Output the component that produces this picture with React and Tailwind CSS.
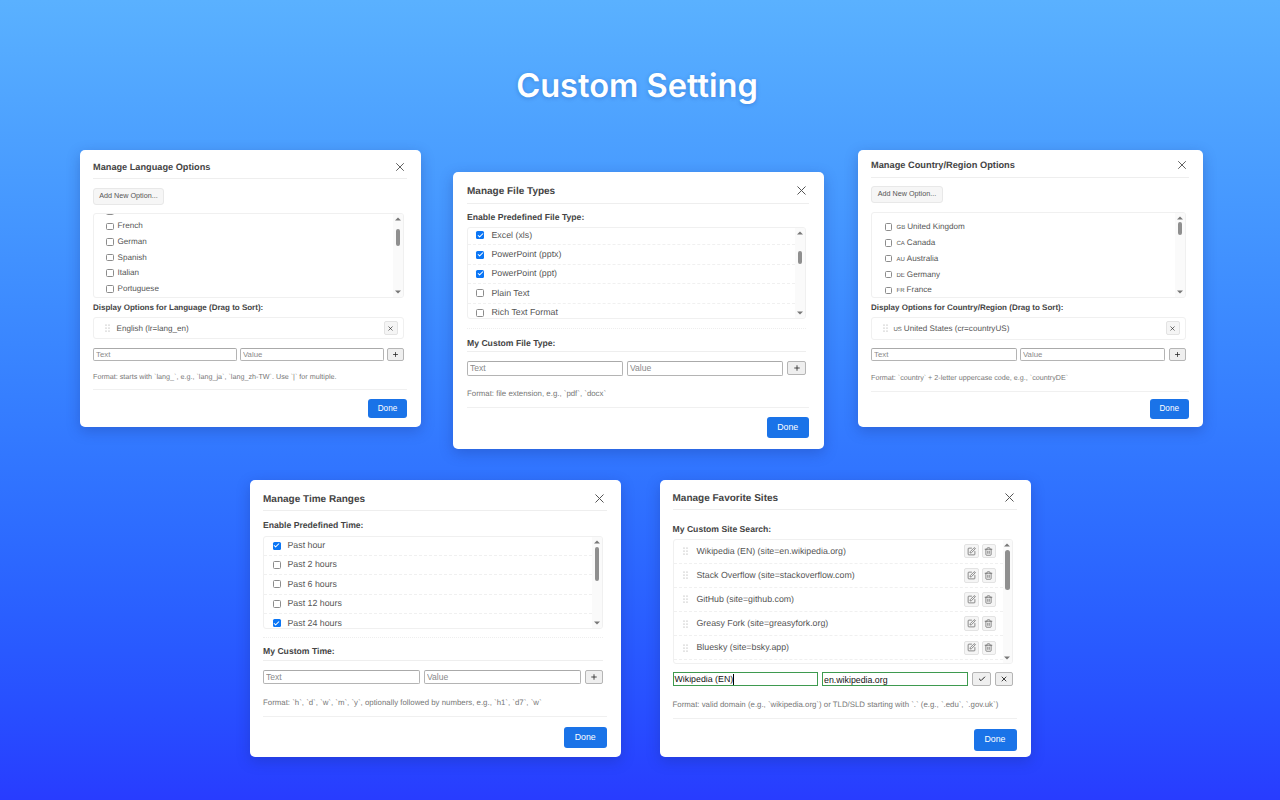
import React from "react";
import { X, Plus, Check, SquarePen, Trash2 } from "lucide-react";

const LANGS = ["", "French", "German", "Spanish", "Italian", "Portuguese"];
const COUNTRIES = [
  ["GB", "United Kingdom"],
  ["CA", "Canada"],
  ["AU", "Australia"],
  ["DE", "Germany"],
  ["FR", "France"],
];
const FILE_TYPES = [
  ["Excel (xls)", true],
  ["PowerPoint (pptx)", true],
  ["PowerPoint (ppt)", true],
  ["Plain Text", false],
  ["Rich Text Format", false],
];
const TIMES = [
  ["Past hour", true],
  ["Past 2 hours", false],
  ["Past 6 hours", false],
  ["Past 12 hours", false],
  ["Past 24 hours", true],
];
const SITES = [
  "Wikipedia (EN) (site=en.wikipedia.org)",
  "Stack Overflow (site=stackoverflow.com)",
  "GitHub (site=github.com)",
  "Greasy Fork (site=greasyfork.org)",
  "Bluesky (site=bsky.app)",
];

function Grip({ className = "" }) {
  return (
    <svg viewBox="0 0 5 8" className={`shrink-0 w-[5px] h-[8px] ${className}`} fill="#999">
      <circle cx="1" cy="1" r="0.6" />
      <circle cx="4" cy="1" r="0.6" />
      <circle cx="1" cy="4" r="0.6" />
      <circle cx="4" cy="4" r="0.6" />
      <circle cx="1" cy="7" r="0.6" />
      <circle cx="4" cy="7" r="0.6" />
    </svg>
  );
}

function Arrow({ up }) {
  return (
    <svg viewBox="0 0 6 4" className="w-[6px] h-[4px] shrink-0">
      <polygon points={up ? "3,0.5 6,3.5 0,3.5" : "0,0.5 6,0.5 3,3.5"} fill="#777" />
    </svg>
  );
}

// fake native scrollbar, thumbClass gives its offset and height
function Scrollbar({ thumbClass, className = "" }) {
  return (
    <div className={`shrink-0 h-full bg-[#fafafa] flex flex-col items-center justify-between py-[3px] ${className}`}>
      <Arrow up />
      <div className="flex-1 w-full flex flex-col items-center">
        <div className={`w-[4.5px] rounded-full bg-[#8f8f8f] ${thumbClass}`} />
      </div>
      <Arrow />
    </div>
  );
}

function Box({ checked, className }) {
  return (
    <span
      className={`shrink-0 flex items-center justify-center rounded-[1.5px] ${
        checked ? "bg-[#0b76f5]" : "bg-white border border-[#8c8c8c]"
      } ${className}`}
    >
      {checked && <Check className="w-[7px] h-[7px] text-white" strokeWidth={3.5} />}
    </span>
  );
}

function Card({ title, className, titleClass, headerClass, iconClass, children }) {
  return (
    <div className={`shrink-0 bg-white rounded-[5px] shadow-[0_4px_14px_rgba(20,40,120,0.28)] flex flex-col ${className}`}>
      <div className={`flex items-center justify-between border-b border-[#eeeeee] ${headerClass}`}>
        <h2 className={`font-bold text-[#444444] ${titleClass}`}>{title}</h2>
        <X className={`text-[#555555] ${iconClass}`} strokeWidth={1.6} />
      </div>
      {children}
    </div>
  );
}

function Field({ placeholder, className }) {
  return (
    <input
      readOnly
      placeholder={placeholder}
      className={`min-w-0 border border-[#b4b4b4] border-t-[#aaaaaa] rounded-[2px] bg-white px-[2px] placeholder:text-[#8a8a8a] ${className}`}
    />
  );
}

function SmallButton({ className, children }) {
  return (
    <button className={`shrink-0 flex items-center justify-center bg-[#efefef] border border-[#b5b5b5] rounded-[2px] text-[#222222] ${className}`}>
      {children}
    </button>
  );
}

function Done({ className }) {
  return (
    <div className="flex justify-end">
      <button className={`bg-[#1a73e8] text-white rounded-[3px] pt-[1px] ${className}`}>Done</button>
    </div>
  );
}

function CheckRow({ label, checked, className, boxClass }) {
  return (
    <div className={`flex items-center border-b border-dashed border-[#f0f0f0] text-[#555555] ${className}`}>
      <Box checked={checked} className={boxClass} />
      <span>{label}</span>
    </div>
  );
}

function IconBtn({ children }) {
  return (
    <button className="w-[14.5px] h-[14.5px] flex items-center justify-center bg-[#f5f5f5] border border-[#e3e3e3] rounded-[2px] text-[#666666]">
      {children}
    </button>
  );
}

function LanguageCard() {
  return (
    <Card
      title="Manage Language Options"
      className="w-[341px] h-[277px] pl-[13px] pr-[14px]"
      headerClass="h-[28.5px] pt-[7px]"
      titleClass="text-[9.2px] pt-[2px]"
      iconClass="w-[14px] h-[14px]"
    >
      <button className="mt-[9px] w-[71px] h-[17px] bg-[#f6f6f6] border border-[#e8e8e8] rounded-[3px] text-[7.2px] text-[#555555]">
        Add New Option...
      </button>
      <div className="mt-[8.5px] w-[311px] h-[85px] flex border border-[#f0f0f0] rounded-[3px] overflow-hidden">
        <div className="flex-1 -mt-[11px]">
          {LANGS.map((name) => (
            <div key={name} className="flex items-center h-[15.6px] pl-[12px] text-[8.1px] text-[#555555]">
              <Box className="mr-[4px] w-[7.5px] h-[7.5px]" />
              <span>{name}</span>
            </div>
          ))}
        </div>
        <Scrollbar className="w-[10px]" thumbClass="mt-[8px] h-[17px]" />
      </div>
      <div className="mt-[4px] h-[12px] flex items-center font-bold text-[8px] text-[#444444]">
        Display Options for Language (Drag to Sort):
      </div>
      <div className="mt-[3px] w-[311px] h-[22px] flex items-center justify-between pl-[10.5px] pr-[5.5px] border border-[#f0f0f0] rounded-[3px] text-[8.1px] text-[#555555]">
        <div className="flex items-center gap-[7px]">
          <Grip />
          <span className="pt-[2px]">English (lr=lang_en)</span>
        </div>
        <SmallButton className="w-[14px] h-[14px] !bg-[#f5f5f5] !border-[#e3e3e3]">
          <X className="w-[7px] h-[7px]" strokeWidth={2.2} />
        </SmallButton>
      </div>
      <div className="mt-[8.5px] w-[311px] flex gap-[3px] h-[13px]">
        <Field placeholder="Text" className="w-[144px] h-[13px] text-[7.8px]" />
        <Field placeholder="Value" className="w-[144px] h-[13px] text-[7.8px]" />
        <SmallButton className="w-[17px] h-[13px]">
          <Plus className="w-[7px] h-[7px]" strokeWidth={2.6} />
        </SmallButton>
      </div>
      <p className="mt-[12px] h-[10px] flex items-center text-[7.2px] text-[#777777]">
        Format: starts with `lang_`, e.g., `lang_ja`, `lang_zh-TW`. Use `|` for multiple.
      </p>
      <div className="mt-[6.5px] pt-[8.5px] border-t border-[#f0f0f0]">
        <Done className="w-[39px] h-[19.5px] text-[8.2px]" />
      </div>
    </Card>
  );
}

function FileTypesCard() {
  return (
    <Card
      title="Manage File Types"
      className="w-[371px] h-[277px] mt-[22px] ml-[32px] pl-[14px] pr-[15px]"
      headerClass="h-[32px] pt-[6px]"
      titleClass="text-[10px] pt-[1px]"
      iconClass="w-[15px] h-[15px]"
    >
      <div className="mt-[7px] h-[12px] flex items-center font-bold text-[8.65px] text-[#444444]">
        Enable Predefined File Type:
      </div>
      <div className="mt-[3.5px] w-[339px] h-[92.5px] flex border border-[#f0f0f0] rounded-[3px] overflow-hidden">
        <div className="flex-1 -mt-[1.5px]">
          {FILE_TYPES.map(([label, on]) => (
            <CheckRow
              key={label}
              label={label}
              checked={on}
              className="h-[19.4px] pl-[8px] text-[8.8px]"
              boxClass="mr-[7.5px] w-[8px] h-[8px]"
            />
          ))}
        </div>
        <Scrollbar className="w-[10px]" thumbClass="mt-[16px] h-[13.5px]" />
      </div>
      <div className="mt-[8.5px] w-[339px] border-t border-dotted border-[#eeeeee] pt-[10px] pb-[2px] h-[23px] flex items-center font-bold text-[8.65px] text-[#444444]">
        My Custom File Type:
      </div>
      <div className="w-[339px] border-t border-[#eeeeee]" />
      <div className="mt-[9.5px] w-[339px] flex gap-[4px] h-[14.5px]">
        <Field placeholder="Text" className="w-[156px] h-[14.5px] text-[8.6px]" />
        <Field placeholder="Value" className="w-[156px] h-[14.5px] text-[8.6px]" />
        <SmallButton className="w-[19px] h-[14px]">
          <Plus className="w-[8px] h-[8px]" strokeWidth={2.4} />
        </SmallButton>
      </div>
      <p className="mt-[12.5px] h-[11px] flex items-center text-[7.85px] text-[#777777]">
        Format: file extension, e.g., `pdf`, `docx`
      </p>
      <div className="mt-[8px] pt-[9px] border-t border-[#f0f0f0]">
        <Done className="w-[42.5px] h-[21px] text-[8.8px]" />
      </div>
    </Card>
  );
}

function CountryCard() {
  return (
    <Card
      title="Manage Country/Region Options"
      className="w-[345px] h-[277px] pl-[13px] pr-[14px] ml-[34px]"
      headerClass="h-[27.5px] pt-[3px]"
      titleClass="text-[9.25px] pt-[2px]"
      iconClass="w-[14px] h-[14px]"
    >
      <button className="mt-[8.5px] w-[72px] h-[17px] bg-[#f6f6f6] border border-[#e8e8e8] rounded-[3px] text-[7.2px] text-[#555555]">
        Add New Option...
      </button>
      <div className="mt-[9px] w-[315px] h-[85.5px] flex border border-[#f0f0f0] rounded-[3px] overflow-hidden">
        <div className="flex-1 pt-[6px]">
          {COUNTRIES.map(([code, name]) => (
            <div key={code} className="flex items-center h-[15.9px] pl-[12.5px] text-[8.1px] text-[#555555]">
              <Box className="mr-[4.5px] w-[7.5px] h-[7.5px]" />
              <span>
                <span className="text-[6px] mr-[2px]">{code}</span>
                {name}
              </span>
            </div>
          ))}
        </div>
        <Scrollbar className="w-[10px]" thumbClass="mt-[1.5px] h-[13px]" />
      </div>
      <div className="mt-[4.5px] h-[12px] flex items-center font-bold text-[8px] text-[#444444]">
        Display Options for Country/Region (Drag to Sort):
      </div>
      <div className="mt-[2.5px] w-[315px] h-[23px] flex items-center justify-between pl-[10.5px] pr-[5.5px] border border-[#f0f0f0] rounded-[3px] text-[8.1px] text-[#555555]">
        <div className="flex items-center gap-[6px]">
          <Grip />
          <span className="pt-[3px]">
            <span className="text-[6px] mr-[2px]">US</span>United States (cr=countryUS)
          </span>
        </div>
        <SmallButton className="w-[14px] h-[14px] !bg-[#f5f5f5] !border-[#e3e3e3]">
          <X className="w-[7px] h-[7px]" strokeWidth={2.2} />
        </SmallButton>
      </div>
      <div className="mt-[8.5px] w-[315px] flex gap-[3px] h-[13px]">
        <Field placeholder="Text" className="w-[146px] h-[13px] text-[7.8px]" />
        <Field placeholder="Value" className="w-[145px] h-[13px] text-[7.8px]" />
        <SmallButton className="w-[17px] h-[13px] ml-[1px]">
          <Plus className="w-[7px] h-[7px]" strokeWidth={2.6} />
        </SmallButton>
      </div>
      <p className="mt-[12.5px] h-[10px] flex items-center text-[7.2px] text-[#777777]">
        Format: `country` + 2-letter uppercase code, e.g., `countryDE`
      </p>
      <div className="mt-[7px] pt-[7.5px] border-t border-[#f0f0f0]">
        <Done className="w-[39.5px] h-[20px] text-[8.2px]" />
      </div>
    </Card>
  );
}

function TimeCard() {
  return (
    <Card
      title="Manage Time Ranges"
      className="w-[371px] h-[277px] pl-[13px] pr-[14px]"
      headerClass="h-[31px] pt-[7px]"
      titleClass="text-[10px] pt-[1px]"
      iconClass="w-[15px] h-[15px]"
    >
      <div className="mt-[8.5px] h-[12px] flex items-center font-bold text-[8.65px] text-[#444444]">
        Enable Predefined Time:
      </div>
      <div className="mt-[4px] w-[340px] h-[93px] flex border border-[#f0f0f0] rounded-[3px] overflow-hidden">
        <div className="flex-1">
          {TIMES.map(([label, on]) => (
            <CheckRow
              key={label}
              label={label}
              checked={on}
              className="h-[19.4px] pl-[8.5px] text-[8.8px]"
              boxClass="mr-[7px] w-[8px] h-[8px]"
            />
          ))}
        </div>
        <Scrollbar className="w-[10px]" thumbClass="mt-[3px] h-[34px]" />
      </div>
      <div className="mt-[8.5px] w-[340px] border-t border-dotted border-[#eeeeee] h-[23px] pt-[5px] flex items-center font-bold text-[8.65px] text-[#444444]">
        My Custom Time:
      </div>
      <div className="w-[340px] border-t border-[#eeeeee]" />
      <div className="mt-[8.5px] w-[340px] flex gap-[4px] h-[14.5px]">
        <Field placeholder="Text" className="w-[157px] h-[14.5px] text-[8.6px]" />
        <Field placeholder="Value" className="w-[157px] h-[14.5px] text-[8.6px]" />
        <SmallButton className="w-[18px] h-[14px]">
          <Plus className="w-[8px] h-[8px]" strokeWidth={2.4} />
        </SmallButton>
      </div>
      <p className="mt-[13.5px] h-[11px] flex items-center text-[7.85px] text-[#777777]">
        Format: `h`, `d`, `w`, `m`, `y`, optionally followed by numbers, e.g., `h1`, `d7`, `w`
      </p>
      <div className="mt-[7.5px] pt-[9.5px] border-t border-[#f0f0f0]">
        <Done className="w-[43.5px] h-[21.5px] text-[8.8px]" />
      </div>
    </Card>
  );
}

function SitesCard() {
  return (
    <Card
      title="Manage Favorite Sites"
      className="w-[371px] h-[277px] pl-[12.5px] pr-[14.5px]"
      headerClass="h-[30px] pt-[6px]"
      titleClass="text-[10px] pt-[1px]"
      iconClass="w-[15px] h-[15px]"
    >
      <div className="mt-[13px] h-[12px] flex items-center font-bold text-[8.65px] text-[#444444]">
        My Custom Site Search:
      </div>
      <div className="mt-[3.5px] w-[340.5px] h-[125px] flex border border-[#f0f0f0] rounded-[3px] overflow-hidden">
        <div className="flex-1">
          {SITES.map((site) => (
            <div
              key={site}
              className="flex items-center justify-between h-[24.2px] pl-[9.5px] pr-[6.5px] border-b border-dashed border-[#f0f0f0] text-[8.8px] text-[#555555]"
            >
              <div className="flex items-center gap-[8.5px]">
                <Grip />
                <span>{site}</span>
              </div>
              <div className="flex gap-[3px]">
                <IconBtn>
                  <SquarePen className="w-[9px] h-[9px]" strokeWidth={2} />
                </IconBtn>
                <IconBtn>
                  <Trash2 className="w-[9px] h-[9px]" strokeWidth={2} />
                </IconBtn>
              </div>
            </div>
          ))}
        </div>
        <Scrollbar className="w-[9.5px]" thumbClass="mt-[3.5px] h-[40px]" />
      </div>
      <div className="mt-[8.5px] w-[340.5px] flex h-[14px]">
        <div className="w-[145.5px] h-[14px] flex items-center border-[1.5px] border-[#3e9a4f] px-[1px] pt-[1px] text-[8.8px] text-[#111111] bg-white">
          Wikipedia (EN)
          <span className="w-[1px] h-[11px] bg-black" />
        </div>
        <input
          readOnly
          value="en.wikipedia.org"
          className="ml-[4px] w-[146px] h-[14px] border-[1.5px] border-[#3e9a4f] px-[1px] pt-[1px] text-[8.8px] text-[#111111] bg-white"
        />
        <SmallButton className="ml-[4px] w-[19px] h-[14px]">
          <Check className="w-[8px] h-[8px]" strokeWidth={3} />
        </SmallButton>
        <SmallButton className="ml-[4px] w-[18px] h-[14px]">
          <X className="w-[8px] h-[8px]" strokeWidth={2.6} />
        </SmallButton>
      </div>
      <p className="mt-[13.5px] h-[11px] flex items-center text-[7.85px] text-[#777777] whitespace-nowrap">
        Format: valid domain (e.g., `wikipedia.org`) or TLD/SLD starting with `.` (e.g., `.edu`, `.gov.uk`)
      </p>
      <div className="mt-[7.5px] pt-[9.5px] border-t border-[#f0f0f0]">
        <Done className="w-[43px] h-[22px] text-[8.8px]" />
      </div>
    </Card>
  );
}

export default function App() {
  return (
    <div className="w-[1280px] h-[800px] overflow-hidden bg-linear-to-b from-[#5ab1ff] to-[#283cff] font-['Liberation_Sans',Arial,sans-serif] [text-rendering:geometricPrecision]">
      <div className="h-[150px] pt-[20px] pr-[6px] flex items-center justify-center">
        <h1 className="font-['Inter',sans-serif] font-semibold text-[32.6px] text-white [text-shadow:0_1px_4px_rgba(0,40,120,0.25)]">
          Custom Setting
        </h1>
      </div>
      <div className="h-[330px] flex items-start pl-[80px]">
        <LanguageCard />
        <FileTypesCard />
        <CountryCard />
      </div>
      <div className="flex items-start pl-[250px] gap-[39px]">
        <TimeCard />
        <SitesCard />
      </div>
    </div>
  );
}
